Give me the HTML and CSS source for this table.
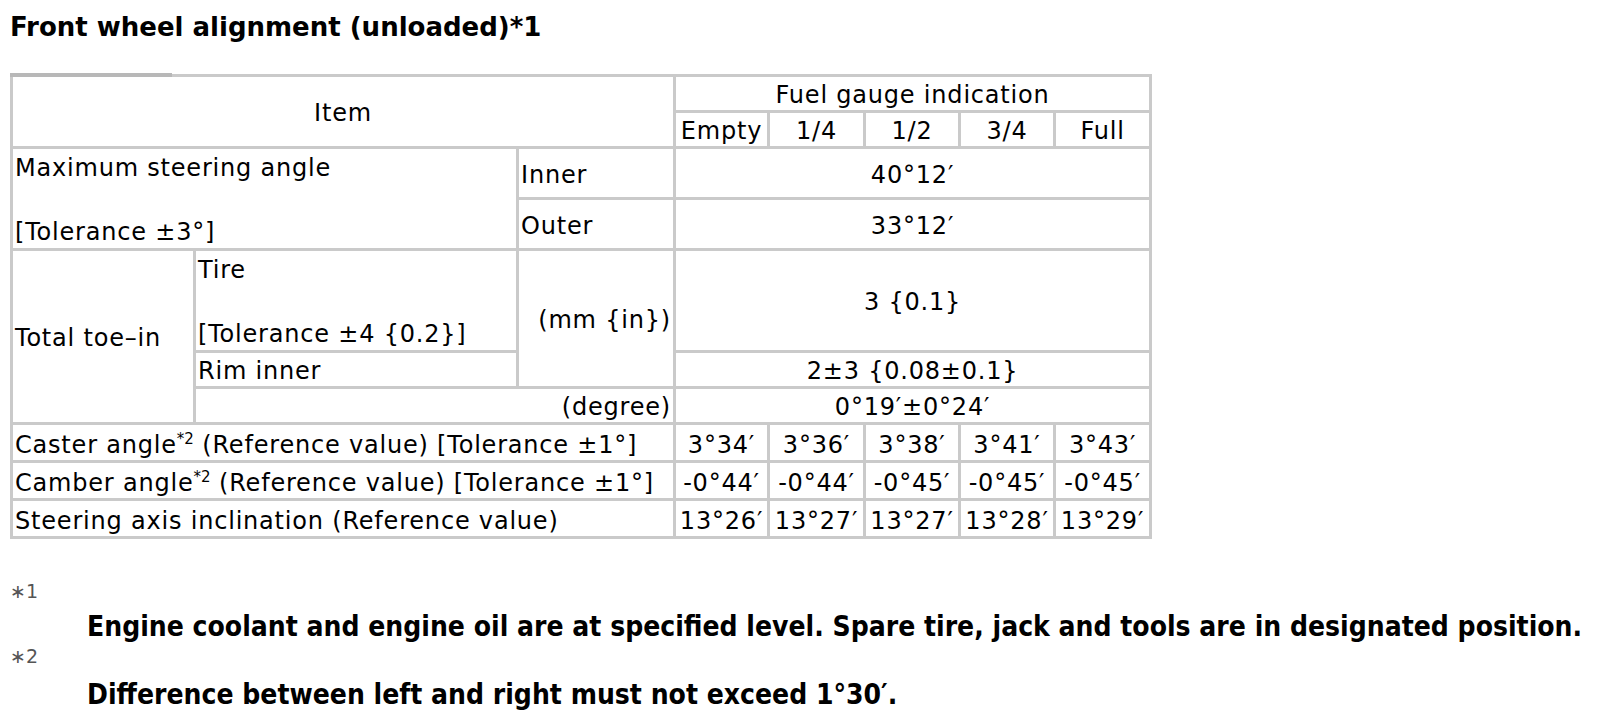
FILE: index.html
```html
<!DOCTYPE html>
<html lang="en">
<head>
<meta charset="utf-8">
<title>Front wheel alignment</title>
<link rel="stylesheet" href="styles.css">
</head>
<body>
<h1 class="title">Front wheel alignment (unloaded)*1</h1>
<div class="table-wrap">
<table class="spec">
  <colgroup>
    <col class="col-a">
    <col class="col-b">
    <col class="col-c">
    <col class="col-v1">
    <col class="col-v2">
    <col class="col-v3">
    <col class="col-v4">
    <col class="col-v5">
  </colgroup>
  <tr>
    <td colspan="3" rowspan="2" class="ctr">Item</td>
    <td colspan="5" class="ctr">Fuel gauge indication</td>
  </tr>
  <tr>
    <td class="ctr">Empty</td>
    <td class="ctr">1/4</td>
    <td class="ctr">1/2</td>
    <td class="ctr">3/4</td>
    <td class="ctr">Full</td>
  </tr>
  <tr>
    <td colspan="2" rowspan="2" class="ml">Maximum steering angle<br><br>[Tolerance ±3°]</td>
    <td>Inner</td>
    <td colspan="5" class="ctr">40°12′</td>
  </tr>
  <tr>
    <td>Outer</td>
    <td colspan="5" class="ctr">33°12′</td>
  </tr>
  <tr>
    <td rowspan="3">Total toe–in</td>
    <td class="ml">Tire<br><br>[Tolerance ±4 {0.2}]</td>
    <td rowspan="2" class="rgt">(mm {in})</td>
    <td colspan="5" class="ctr">3 {0.1}</td>
  </tr>
  <tr>
    <td>Rim inner</td>
    <td colspan="5" class="ctr">2±3 {0.08±0.1}</td>
  </tr>
  <tr>
    <td colspan="2" class="rgt">(degree)</td>
    <td colspan="5" class="ctr">0°19′±0°24′</td>
  </tr>
  <tr class="tall">
    <td colspan="3">Caster angle<sup>*2</sup> (Reference value) [Tolerance ±1°]</td>
    <td class="ctr">3°34′</td>
    <td class="ctr">3°36′</td>
    <td class="ctr">3°38′</td>
    <td class="ctr">3°41′</td>
    <td class="ctr">3°43′</td>
  </tr>
  <tr class="tall">
    <td colspan="3">Camber angle<sup>*2</sup> (Reference value) [Tolerance ±1°]</td>
    <td class="ctr">-0°44′</td>
    <td class="ctr">-0°44′</td>
    <td class="ctr">-0°45′</td>
    <td class="ctr">-0°45′</td>
    <td class="ctr">-0°45′</td>
  </tr>
  <tr class="tall">
    <td colspan="3">Steering axis inclination (Reference value)</td>
    <td class="ctr">13°26′</td>
    <td class="ctr">13°27′</td>
    <td class="ctr">13°27′</td>
    <td class="ctr">13°28′</td>
    <td class="ctr">13°29′</td>
  </tr>
</table>
</div>
<dl class="notes">
  <dt>∗1</dt>
  <dd>Engine coolant and engine oil are at specified level. Spare tire, jack and tools are in designated position.</dd>
  <dt>∗2</dt>
  <dd>Difference between left and right must not exceed 1°30′.</dd>
</dl>
</body>
</html>
```

FILE: styles.css
```css
html, body {
  background: #ffffff;
}

body {
  margin: 0;
  padding: 0 10px;
  font-family: "DejaVu Sans", Verdana, sans-serif;
  color: #000000;
}

.title {
  margin: 0;
  padding-top: 12px;
  font-size: 26px;
  line-height: 30px;
  font-weight: bold;
}

.table-wrap {
  position: relative;
  margin-top: 32px;
  width: max-content;
}

.table-wrap::before {
  content: "";
  position: absolute;
  left: 0;
  top: -1px;
  width: 162px;
  height: 4px;
  background: #b8b8b8;
}

.spec {
  width: 1141px;
  table-layout: fixed;
  border-collapse: collapse;
  border: 3px solid #c8c8c8;
  font-size: 24px;
  letter-spacing: 0.8px;
}

.col-a { width: 183px; }
.col-b { width: 323px; }
.col-c { width: 157px; }
.col-v1 { width: 94px; }
.col-v2 { width: 96px; }
.col-v3 { width: 95px; }
.col-v4 { width: 95px; }
.col-v5 { width: 96px; }

.spec td {
  border: 3px solid #cacaca;
  padding: 3px 2px 0;
  line-height: 30px;
  white-space: nowrap;
  vertical-align: middle;
  text-align: left;
}

.spec td.ml {
  line-height: 32px;
}

.spec tr.tall td {
  padding-top: 5px;
}

.spec td.ctr {
  text-align: center;
  padding-left: 0;
  padding-right: 0;
}

.spec td.rgt {
  text-align: right;
}

.spec sup {
  font-size: 15px;
  line-height: 0;
  vertical-align: 9px;
  letter-spacing: 0;
}

.notes {
  margin: 38px 0 0;
}

.notes dt {
  font-size: 19px;
  line-height: 28px;
  color: #555555;
}

.notes dd {
  margin: 6px 0 0 77px;
  font-family: "DejaVu Sans Condensed", "DejaVu Sans", sans-serif;
  font-weight: bold;
  font-size: 28px;
  line-height: 32px;
}

.notes dd + dt {
  margin-top: -1px;
}

.notes dt + dd:last-child {
  margin-top: 9px;
}
```
